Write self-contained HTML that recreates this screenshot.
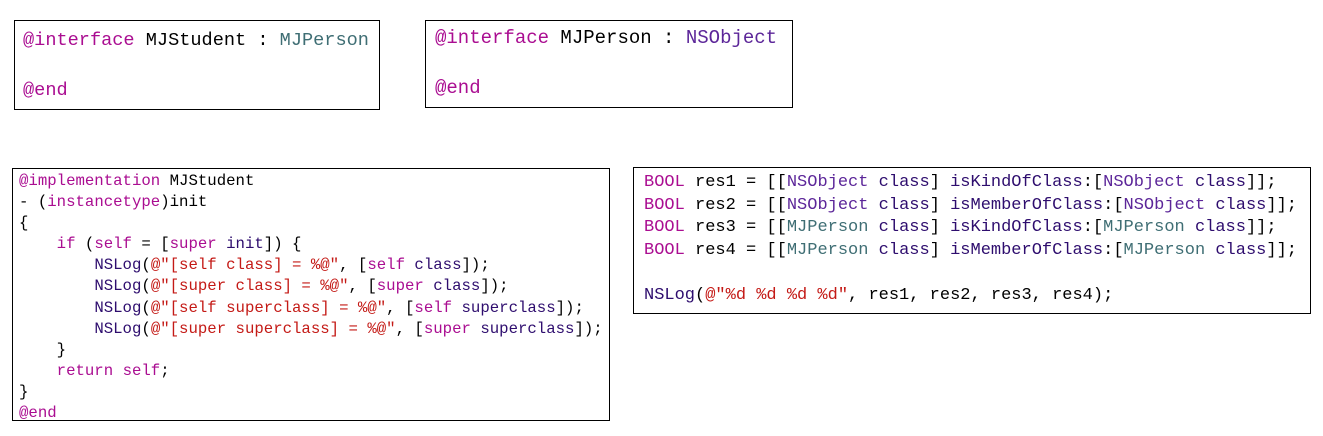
<!DOCTYPE html>
<html><head><meta charset="utf-8"><style>
html,body{margin:0;padding:0;background:#fff;width:1323px;height:436px;overflow:hidden}
.b{position:absolute;border:1px solid #000;box-sizing:border-box;font-family:"Liberation Mono",monospace;color:#000;white-space:pre}
.k{color:#aa0d91}.t{color:#3f6e74}.n{color:#5c2699}.s{color:#c41a16}.m{color:#2e0d6e}
.l{position:absolute;left:0}
</style></head><body>
<div class="b" style="left:14px;top:20px;width:366px;height:90px;font-size:18.6px">
<div class="l" style="left:8px;top:9px"><span class="k">@interface</span> MJStudent : <span class="t">MJPerson</span></div>
<div class="l" style="left:8px;top:59px"><span class="k">@end</span></div>
</div>
<div class="b" style="left:425px;top:20px;width:368px;height:88px;font-size:19px">
<div class="l" style="left:9px;top:6px"><span class="k">@interface</span> MJPerson : <span class="n">NSObject</span></div>
<div class="l" style="left:9px;top:56px"><span class="k">@end</span></div>
</div>
<div class="b" style="left:12px;top:168px;width:598px;height:253px;font-size:15.7px;line-height:21.1px;padding:2px 0 0 6px"><span class="k">@implementation</span> MJStudent
- (<span class="k">instancetype</span>)init
{
    <span class="k">if</span> (<span class="k">self</span> = [<span class="k">super</span> <span class="m">init</span>]) {
        <span class="m">NSLog</span>(<span class="s">@"[self class] = %@"</span>, [<span class="k">self</span> <span class="m">class</span>]);
        <span class="m">NSLog</span>(<span class="s">@"[super class] = %@"</span>, [<span class="k">super</span> <span class="m">class</span>]);
        <span class="m">NSLog</span>(<span class="s">@"[self superclass] = %@"</span>, [<span class="k">self</span> <span class="m">superclass</span>]);
        <span class="m">NSLog</span>(<span class="s">@"[super superclass] = %@"</span>, [<span class="k">super</span> <span class="m">superclass</span>]);
    }
    <span class="k">return</span> <span class="k">self</span>;
}
<span class="k">@end</span></div>
<div class="b" style="left:633px;top:167px;width:678px;height:147px;font-size:17px;line-height:22.6px;padding:4px 0 0 10px"><span class="k">BOOL</span> res1 = [[<span class="n">NSObject</span> <span class="m">class</span>] <span class="m">isKindOfClass</span>:[<span class="n">NSObject</span> <span class="m">class</span>]];
<span class="k">BOOL</span> res2 = [[<span class="n">NSObject</span> <span class="m">class</span>] <span class="m">isMemberOfClass</span>:[<span class="n">NSObject</span> <span class="m">class</span>]];
<span class="k">BOOL</span> res3 = [[<span class="t">MJPerson</span> <span class="m">class</span>] <span class="m">isKindOfClass</span>:[<span class="t">MJPerson</span> <span class="m">class</span>]];
<span class="k">BOOL</span> res4 = [[<span class="t">MJPerson</span> <span class="m">class</span>] <span class="m">isMemberOfClass</span>:[<span class="t">MJPerson</span> <span class="m">class</span>]];

<span class="m">NSLog</span>(<span class="s">@"%d %d %d %d"</span>, res1, res2, res3, res4);</div>
</body></html>
